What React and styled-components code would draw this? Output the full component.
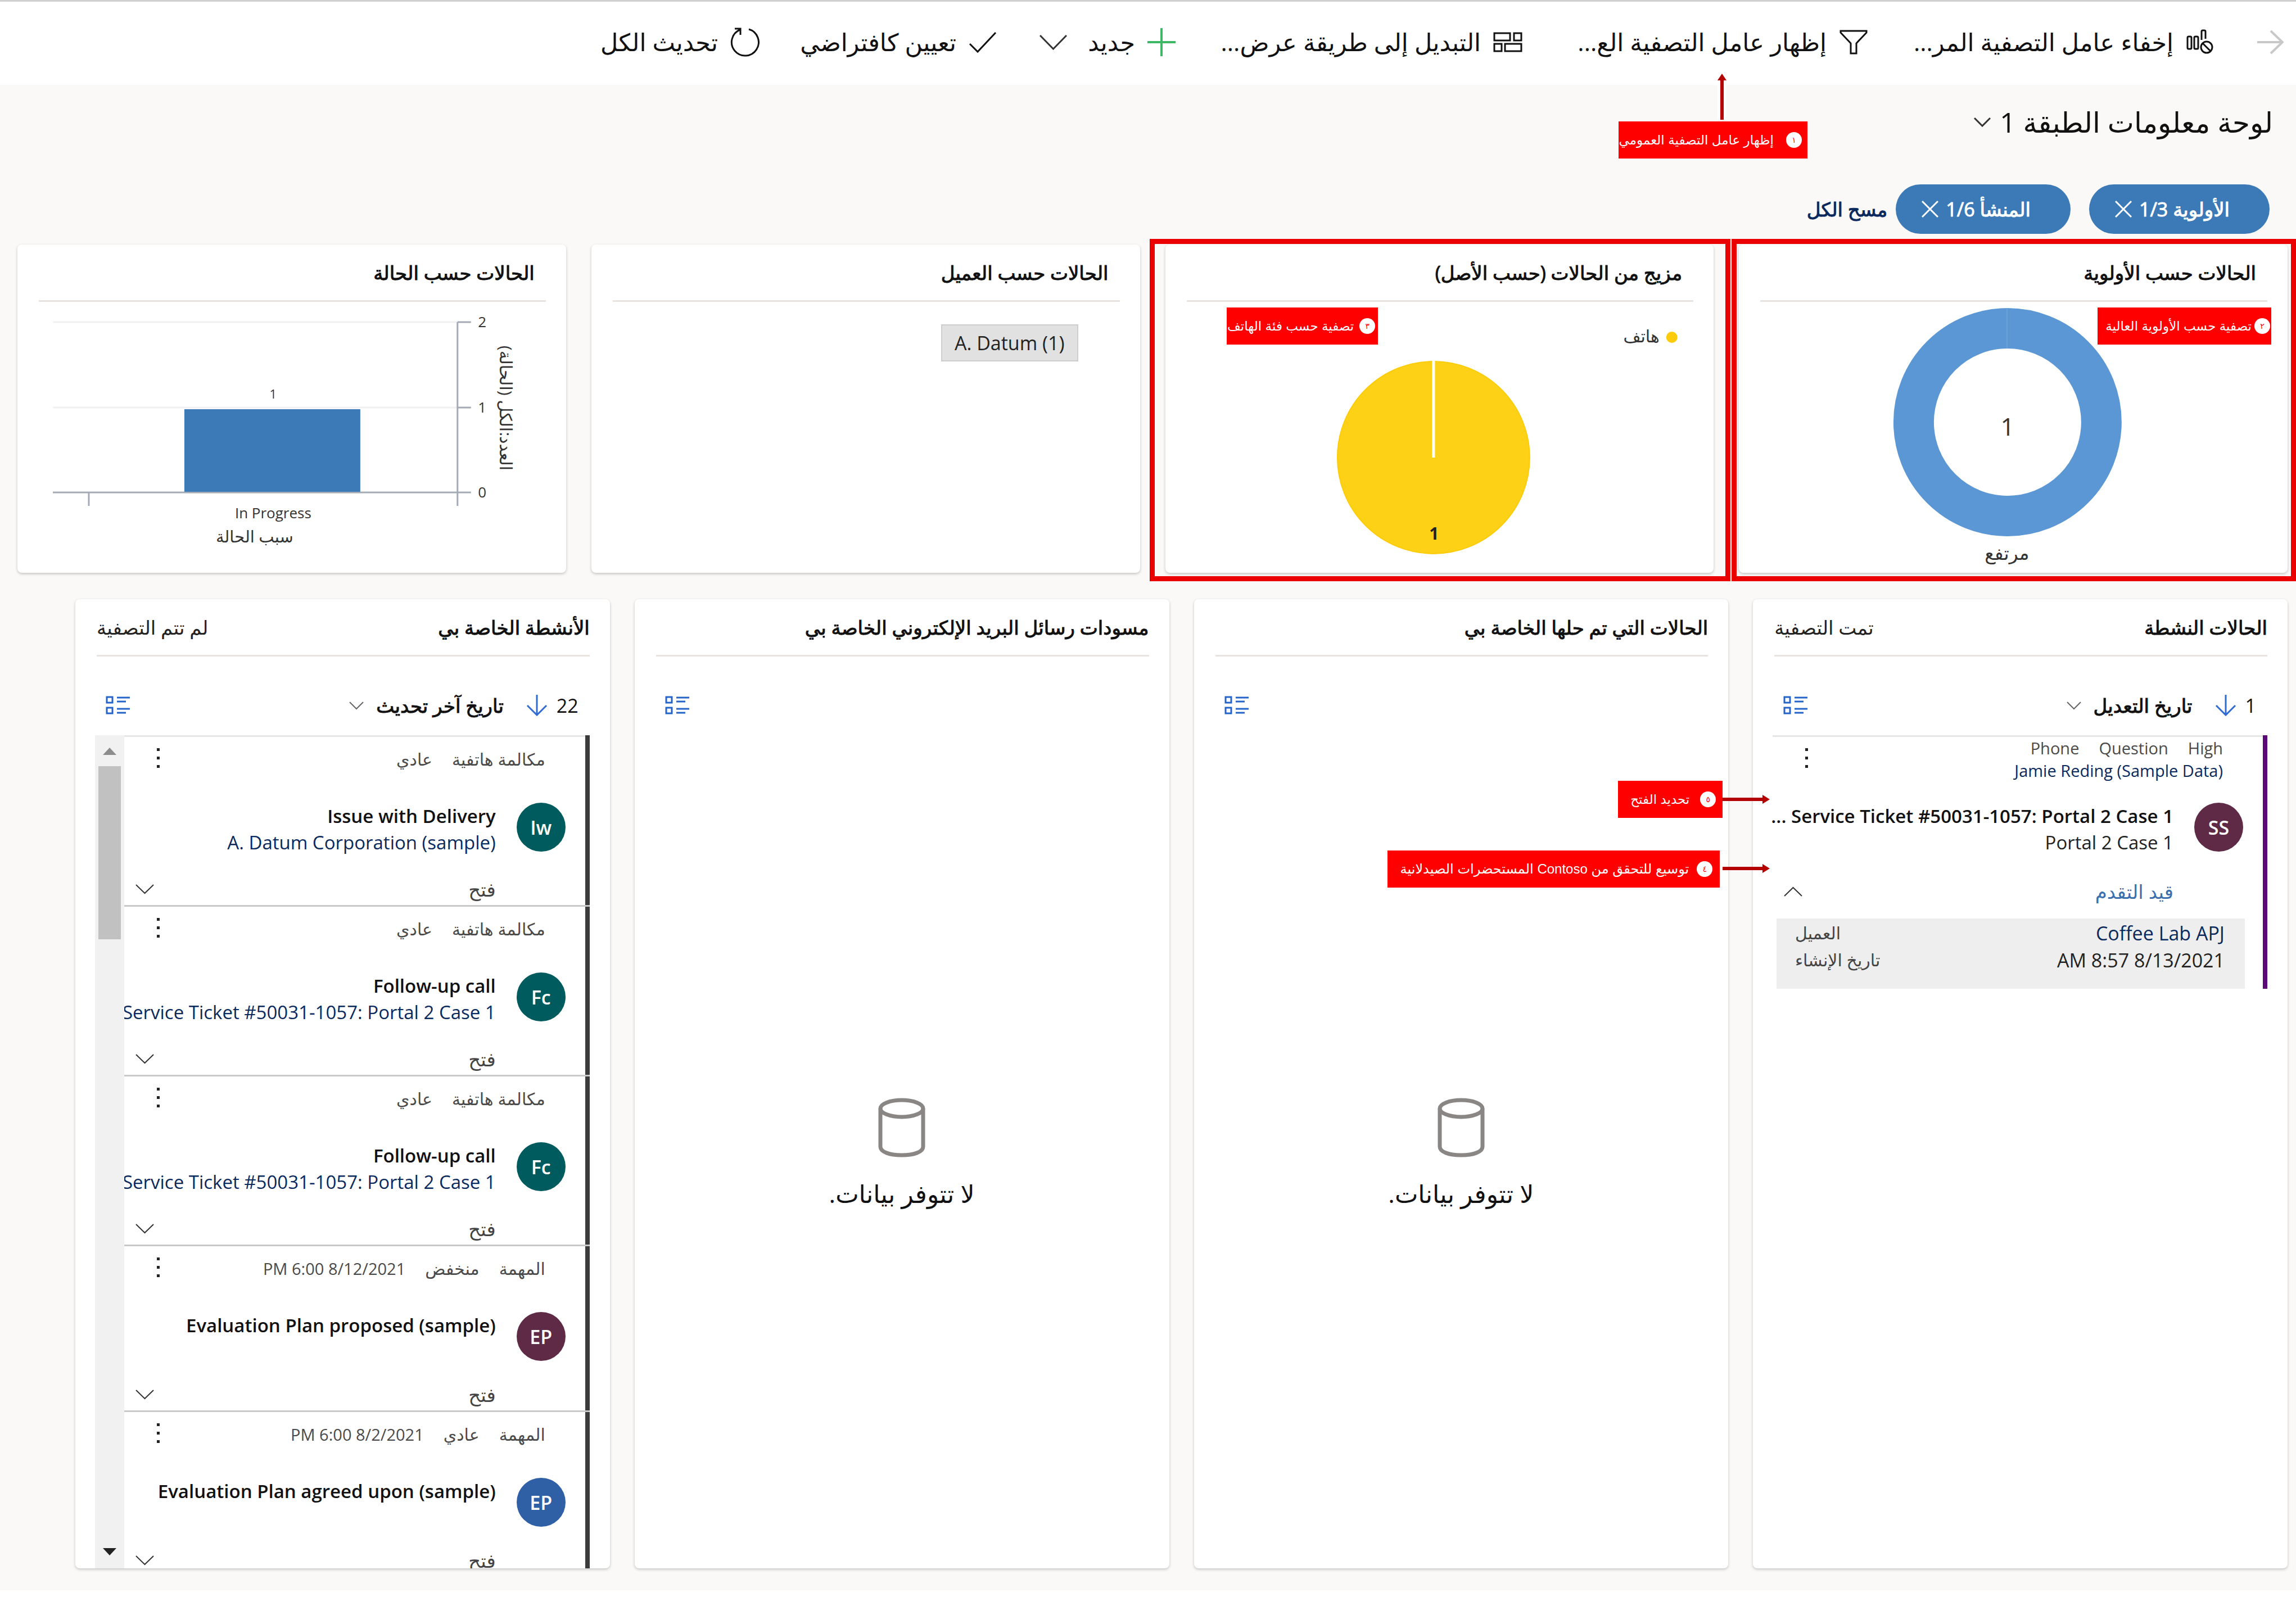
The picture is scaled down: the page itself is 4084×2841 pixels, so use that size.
import React from "react";
import styled, { createGlobalStyle, css } from "styled-components";

const Global = createGlobalStyle`
  *, *::before, *::after { box-sizing: border-box; }
  body {
    margin: 0;
    background: #faf9f8;
    color: #111;
    font-family: "Open Sans", "DejaVu Sans", sans-serif;
  }
  h1, h2, p, ul, dl, dd, dt { margin: 0; padding: 0; font-weight: inherit; font-size: inherit; }
  ul { list-style: none; }
  button { font: inherit; color: inherit; background: none; border: 0; padding: 0; cursor: pointer; }
  a { color: inherit; text-decoration: none; }
  svg { display: block; flex: none; }
`;

/* The Arabic face has no semibold cut, so a hairline stroke stands in for it. */
const semibold = css`
  font-weight: 500;
  -webkit-text-stroke: 1px currentColor;
`;

const Page = styled.div`
  height: 100vh;
  display: flex;
  flex-direction: column;
  overflow: hidden;
  white-space: nowrap;
  border-bottom: 12px solid #fff;
`;

/* ---------- command bar ---------- */

const CommandBar = styled.nav`
  position: relative;
  flex: none;
  height: 151px;
  padding: 0 22px 4px 0;
  border-top: 3px solid #d0d0d0;
  background: #fff;
  display: flex;
  align-items: center;
  font-size: 43px;
  line-height: 48px;
`;

const Command = styled.button`
  display: flex;
  align-items: center;
  gap: 22px;
  flex: none;
  width: ${(p) => p.$width}px;
  margin-inline-start: ${(p) => p.$gap}px;
`;

/* ---------- page heading and filters ---------- */

const Heading = styled.header`
  flex: none;
  height: 177px;
  padding: 34px 41px 0 0;
`;

const ViewPicker = styled.button`
  display: flex;
  align-items: center;
  gap: 16px;
  font-size: 50px;
  line-height: 64px;
`;

const Filters = styled.div`
  flex: none;
  display: flex;
  align-items: center;
  gap: 33px;
  padding-right: 47px;
  margin-bottom: 19px;
`;

const Pill = styled.button`
  height: 88px;
  padding: 0 71px 0 46px;
  border-radius: 44px;
  background: #3b79b7;
  color: #fff;
  display: flex;
  align-items: center;
  gap: 13px;
  font-size: 34px;
  ${semibold}
`;

const ClearAll = styled.a`
  margin-right: -18px;
  color: #0a2a5e;
  font-size: 34px;
  ${semibold}
`;

/* ---------- cards ---------- */

const Charts = styled.section`
  flex: none;
  display: grid;
  grid-template-columns: repeat(4, minmax(0, 1fr));
  gap: 45px;
  padding: 0 15px 0 31px;
  margin-bottom: 47px;
`;

const Lists = styled.section`
  flex: 1;
  min-height: 0;
  display: grid;
  grid-template-columns: repeat(4, minmax(0, 1fr));
  gap: 44px;
  padding: 0 15px 0 134px;
  margin-bottom: 39px;
`;

const Card = styled.article`
  position: relative;
  min-height: 0;
  display: flex;
  flex-direction: column;
  border-radius: 8px;
  background: #fff;
  box-shadow: 0 2px 5px rgba(0, 0, 0, 0.22);
`;

const ChartCard = styled(Card)`
  height: 584px;
`;

const CardHead = styled.header`
  flex: none;
  height: 102px;
  margin: 0 36px 0 38px;
  padding-inline-start: ${(p) => p.$inset || 0}px;
  border-bottom: 3px solid #e8e3df;
  display: flex;
  align-items: center;
  justify-content: space-between;
  font-size: 34px;
`;

const CardTitle = styled.h2`
  ${semibold}
`;

const CardNote = styled.span`
  color: #222;
`;

const Highlight = styled.div`
  position: absolute;
  top: -10px;
  bottom: -15px;
  left: ${(p) => p.$left}px;
  right: ${(p) => p.$right}px;
  border: 9px solid #eb0000;
  pointer-events: none;
`;

const ChartSvg = styled.svg`
  width: 100%;
  height: auto;
  margin-top: 2px;
`;

const ChartText = styled.text`
  direction: rtl;
  fill: ${(p) => p.$fill || "#333"};
  font-size: ${(p) => p.$size}px;
  font-weight: ${(p) => p.$weight || 400};
`;

const Tag = styled.button`
  align-self: flex-start;
  height: 66px;
  margin: 40px 110px 0 0;
  padding: 0 22px;
  border: 2px solid #cdcdcd;
  background: #e1e1e1;
  color: #222;
  font-size: 34px;
`;

/* ---------- list cards ---------- */

const SortBar = styled.div`
  flex: none;
  height: 140px;
  margin: 0 36px 0 38px;
  padding: 34px 20px 0 16px;
  display: flex;
  align-items: center;
  font-size: 34px;
`;

const SortDirection = styled.button`
  margin-inline: 16px 40px;
`;

const SortField = styled.button`
  display: flex;
  align-items: center;
  gap: 22px;
  ${semibold}
`;

const LayoutToggle = styled.button`
  margin-inline-start: auto;
`;

const ListArea = styled.div`
  flex: 1;
  min-height: 0;
  margin: 0 36px 0 35px;
  display: flex;
  overflow: ${(p) => (p.$scroll ? "hidden" : "visible")};
`;

const Rows = styled.ul`
  flex: 1;
  min-width: 0;
  overflow: ${(p) => (p.$scroll ? "hidden" : "visible")};
`;

const Row = styled.li`
  position: relative;
  border-top: 3px solid ${(p) => (p.$first ? "#e6e6e6" : "#c9c9c9")};
  padding: 0 43px 0 0;
  &::before {
    content: "";
    position: absolute;
    right: 0;
    top: ${(p) => (p.$first ? -3 : 0)}px;
    height: ${(p) => (p.$first ? "calc(100% + 3px)" : "100%")};
    width: 8px;
    background: ${(p) => p.$accent};
  }
`;

const Meta = styled.div`
  display: flex;
  justify-content: space-between;
  height: 117px;
  padding: ${(p) => (p.$tight ? 0 : 16)}px 36px 0 57px;
  color: #4a4a4a;
  font-size: ${(p) => (p.$tight ? 29 : 30)}px;
  line-height: ${(p) => (p.$tight ? 40 : 48)}px;
`;

const MetaItems = styled.div`
  display: flex;
  gap: 35px;
`;

const MetaDate = styled.span`
  font-size: 29px;
`;

const Contact = styled.a`
  display: block;
  color: #0a2a5e;
`;

const More = styled.button`
  align-self: flex-start;
  margin-top: ${(p) => (p.$tight ? 18 : 2)}px;
`;

const Main = styled.div`
  display: flex;
  align-items: flex-start;
  gap: 37px;
`;

const Avatar = styled.span`
  flex: none;
  width: 87px;
  height: 87px;
  border-radius: 50%;
  background: ${(p) => p.$color};
  color: #fff;
  display: flex;
  align-items: center;
  justify-content: center;
  font-size: 34px;
  font-weight: 600;
`;

const Texts = styled.div`
  flex: 1;
  min-width: 0;
  font-size: 33px;
  line-height: 47px;
`;

const RowTitle = styled.p`
  font-weight: 600;
`;

const RowSub = styled.p`
  color: ${(p) => (p.$plain ? "#222" : "#0a2a5e")};
`;

const Foot = styled.div`
  display: flex;
  align-items: center;
  justify-content: space-between;
  margin-top: ${(p) => (p.$link ? 40 : 36)}px;
  padding: 0 124px 4px 20px;
  color: ${(p) => (p.$link ? "#3b6fae" : "#444")};
  font-size: 34px;
  line-height: 48px;
`;

const Details = styled.dl`
  margin: 20px -3px 0 0;
  width: 833px;
  max-width: 100%;
  padding: 2px 36px 27px 33px;
  background: #eee;
`;

const DetailRow = styled.div`
  display: flex;
  flex-direction: row-reverse;
  justify-content: space-between;
  line-height: 48px;
  font-size: 34px;
`;

const DetailName = styled.dt`
  color: #444;
  font-size: 30px;
`;

const DetailValue = styled.dd`
  color: ${(p) => (p.$link ? "#0a2a5e" : "#222")};
`;

const ScrollTrack = styled.div`
  flex: none;
  width: 52px;
  background: #f1f1f1;
  display: flex;
  flex-direction: column;
  align-items: center;
  padding: 22px 0 23px;
`;

const ScrollThumb = styled.div`
  width: 40px;
  height: 308px;
  margin: 20px 0 auto;
  background: #c1c1c1;
`;

const Empty = styled.div`
  flex: 1;
  display: flex;
  flex-direction: column;
  align-items: center;
  justify-content: center;
  gap: 38px;
  padding-top: 4px;
  font-size: 44px;
  line-height: 52px;
`;

/* ---------- callouts ---------- */

const Callout = styled.div`
  position: absolute;
  z-index: 2;
  top: ${(p) => p.$top}px;
  right: ${(p) => p.$right};
  width: ${(p) => p.$width}px;
  height: 66px;
  padding-inline-start: ${(p) => p.$pad}px;
  background: #f00;
  color: #fff;
  display: flex;
  align-items: center;
  gap: ${(p) => p.$gap}px;
  font-family: "Liberation Sans", "DejaVu Sans", sans-serif;
  font-size: ${(p) => p.$size || 23}px;
`;

const Step = styled.span`
  flex: none;
  width: 28px;
  height: 28px;
  border-radius: 50%;
  background: #fff;
  color: #f00;
  display: flex;
  align-items: center;
  justify-content: center;
  font-size: 14px;
`;

const Pointer = styled.div`
  position: absolute;
  z-index: 1;
  background: ${(p) => p.$fill || "none"};
  top: ${(p) => p.$top}px;
  right: ${(p) => p.$right};
`;

/* ---------- icons ---------- */

const Icon = ({ w, h, sw = 3, color = "#111", children }) => (
  <svg width={w} height={h} viewBox={`0 0 ${w} ${h}`} fill="none" stroke={color} strokeWidth={sw} aria-hidden="true">
    {children}
  </svg>
);
const Forward = () => (
  <Icon w={48} h={44} color="#c8c8c8" sw={4}><path d="M1 22H45M25 2L46 22L25 42" /></Icon>
);
const HideFilter = () => (
  <Icon w={50} h={46}>
    <rect x="3" y="13" width="7" height="22" rx="2" /><rect x="15" y="13" width="7" height="22" rx="2" />
    <path d="M28 19V4q0-2 2-2h3q2 0 2 2v13" /><circle cx="37" cy="32" r="10" /><path d="M30 25L44 39" />
  </Icon>
);
const Funnel = () => (
  <Icon w={52} h={46}><path d="M3 3H49V6L31 25V43H21V25L3 6Z" /></Icon>
);
const Tiles = () => (
  <Icon w={52} h={38}>
    <rect x="2" y="3" width="28" height="13" /><rect x="37" y="3" width="13" height="13" />
    <rect x="2" y="22" width="13" height="13" /><rect x="21" y="22" width="29" height="13" />
  </Icon>
);
const Plus = () => (
  <Icon w={50} h={50} color="#3fb865" sw={4}><path d="M0 25H50M25 0V50" /></Icon>
);
const Check = () => (
  <Icon w={50} h={40}><path d="M2 23L16 37L48 3" /></Icon>
);
const Refresh = () => (
  <Icon w={52} h={52}><path d="M33 3A24 24 0 1 1 17 4M8 2H18V13" /></Icon>
);
const Chevron = ({ w, h, up, color = "#333", sw = 3 }) => (
  <Icon w={w} h={h} color={color} sw={sw}>
    <path d={up ? `M1 ${h - 1}L${w / 2} 2L${w - 1} ${h - 1}` : `M1 1L${w / 2} ${h - 2}L${w - 1} 1`} />
  </Icon>
);
const Cross = () => (
  <Icon w={30} h={30} color="#fff"><path d="M1 1L29 29M29 1L1 29" /></Icon>
);
const SortArrow = () => (
  <Icon w={38} h={38} color="#2f6bd0"><path d="M19 0V36M2 19L19 36L36 19" /></Icon>
);
const ListIcon = () => (
  <Icon w={43} h={34} color="#2464c8">
    <rect x="2" y="2" width="10" height="10" /><rect x="2" y="21" width="10" height="10" />
    <path d="M20 3H43M20 10H36M20 23H43M20 30H36" />
  </Icon>
);
const Dots = () => (
  <Icon w={8} h={40} sw={0}>
    <g fill="#222"><rect x="1" y="2" width="5" height="5" /><rect x="1" y="17" width="5" height="5" /><rect x="1" y="32" width="5" height="5" /></g>
  </Icon>
);
const Cylinder = () => (
  <Icon w={84} h={106} color="#8a8684" sw={7}>
    <ellipse cx="42" cy="19" rx="38" ry="15" /><path d="M4 19V87C4 96 20 102 42 102S80 96 80 87V19" />
  </Icon>
);
const Triangle = ({ up }) => (
  <svg width="24" height="13" viewBox="0 0 24 13" aria-hidden="true">
    <path d={up ? "M12 0L24 13H0Z" : "M0 0H24L12 13Z"} fill={up ? "#8c8c8c" : "#222"} />
  </svg>
);
const ArrowRight = () => (
  <svg width="84" height="16" viewBox="0 0 84 16" aria-hidden="true">
    <path d="M0 5H71V0L84 8L71 16V11H0Z" fill="#b50000" />
  </svg>
);
const ArrowUp = () => (
  <svg width="16" height="82" viewBox="0 0 16 82" aria-hidden="true">
    <path d="M8 0L16 12H11V82H5V12H0Z" fill="#b50000" />
  </svg>
);

/* ---------- charts ---------- */

const PriorityDonut = () => (
  <ChartSvg viewBox="0 0 976 480" role="img">
    <circle cx="478" cy="212" r="167" fill="none" stroke="#5b97d5" strokeWidth="72" />
    <path d="M477 9V80" stroke="#6ba2da" strokeWidth="2" />
    <ChartText x="478" y="236" textAnchor="middle" $size={43}>1</ChartText>
    <ChartText x="477" y="457" textAnchor="middle" $size={33}>مرتفع</ChartText>
  </ChartSvg>
);

const OriginPie = () => (
  <ChartSvg viewBox="0 0 976 480" role="img">
    <circle cx="901" cy="61" r="10" fill="#fccc0a" />
    <ChartText x="879" y="70" $size={30}>هاتف</ChartText>
    <circle cx="477" cy="275" r="171" fill="#fcd116" stroke="#fccc0a" strokeWidth="2" />
    <path d="M477 102V275" stroke="#fff" strokeWidth="5" />
    <ChartText x="478" y="421" textAnchor="middle" $size={30} $weight={700} $fill="#222">1</ChartText>
  </ChartSvg>
);

const StatusBars = () => (
  <ChartSvg viewBox="0 0 976 480" role="img">
    <path d="M63 34H783M63 186H783" stroke="#f1f1f4" strokeWidth="3" />
    <path d="M63 337H807M783 186H807M783 34H807M127 337V361M783 34V361" stroke="#a5abb5" strokeWidth="3" fill="none" />
    <rect x="297" y="189" width="313" height="147" fill="#3b79b7" />
    <ChartText x="827" y="43" textAnchor="middle" $size={26}>2</ChartText>
    <ChartText x="827" y="195" textAnchor="middle" $size={26}>1</ChartText>
    <ChartText x="827" y="346" textAnchor="middle" $size={26}>0</ChartText>
    <ChartText x="455" y="170" textAnchor="middle" $size={22}>1</ChartText>
    <ChartText x="455" y="383" textAnchor="middle" $size={26}>In Progress</ChartText>
    <ChartText x="422" y="426" textAnchor="middle" $size={29}>سبب الحالة</ChartText>
    <ChartText transform="translate(858 187) rotate(90)" textAnchor="middle" $size={30}>العدد:الكل (الحالة)</ChartText>
  </ChartSvg>
);

/* ---------- data ---------- */

const activities = [
  { meta: ["مكالمة هاتفية", "عادي"], initials: "Iw", color: "#005b5f", title: "Issue with Delivery", sub: "A. Datum Corporation (sample)" },
  { meta: ["مكالمة هاتفية", "عادي"], initials: "Fc", color: "#005b5f", title: "Follow-up call", sub: "Service Ticket #50031-1057: Portal 2 Case 1" },
  { meta: ["مكالمة هاتفية", "عادي"], initials: "Fc", color: "#005b5f", title: "Follow-up call", sub: "Service Ticket #50031-1057: Portal 2 Case 1" },
  { meta: ["المهمة", "منخفض"], due: "8/12/2021 6:00 PM", initials: "EP", color: "#5f2a46", title: "Evaluation Plan proposed (sample)" },
  { meta: ["المهمة", "عادي"], due: "8/2/2021 6:00 PM", initials: "EP", color: "#2f5fa5", title: "Evaluation Plan agreed upon (sample)" },
];

const ListHead = ({ title, note, count, field }) => (
  <>
    <CardHead>
      <CardTitle>{title}</CardTitle>
      {note && <CardNote>{note}</CardNote>}
    </CardHead>
    <SortBar>
      {field && (
        <>
          <span>{count}</span>
          <SortDirection type="button" aria-label="ترتيب"><SortArrow /></SortDirection>
          <SortField type="button">{field}<Chevron w={26} h={15} color="#666" sw={2} /></SortField>
        </>
      )}
      <LayoutToggle type="button" aria-label="عرض"><ListIcon /></LayoutToggle>
    </SortBar>
  </>
);

const EmptyList = () => (
  <Empty>
    <Cylinder />
    <p>لا تتوفر بيانات.</p>
  </Empty>
);

export default function App() {
  return (
    <>
      <Global />
      <Page dir="rtl" lang="ar">
        <CommandBar>
          <Command type="button" $gap={0} $width={48} aria-label="رجوع"><Forward /></Command>
          <Command type="button" $gap={76} $width={527}><HideFilter />إخفاء عامل التصفية المر...</Command>
          <Command type="button" $gap={88} $width={523}><Funnel />إظهار عامل التصفية الع...</Command>
          <Command type="button" $gap={92} $width={538}><Tiles />التبديل إلى طريقة عرض...</Command>
          <Command type="button" $gap={79} $width={153}><Plus />جديد</Command>
          <Command type="button" $gap={40} $width={49} aria-label="المزيد"><Chevron w={49} h={27} /></Command>
          <Command type="button" $gap={76} $width={345}><Check />تعيين كافتراضي</Command>
          <Command type="button" $gap={77} $width={276}><Refresh />تحديث الكل</Command>
          <Pointer $top={128} $right="1013px" $fill="#fff"><ArrowUp /></Pointer>
          <Callout $top={213} $right="869px" $width={336} $pad={10} $gap={22}>
            <Step>١</Step>إظهار عامل التصفية العمومي
          </Callout>
        </CommandBar>

        <Heading>
          <h1><ViewPicker type="button">لوحة معلومات الطبقة 1<Chevron w={30} h={17} /></ViewPicker></h1>
        </Heading>

        <Filters>
          <Pill type="button">الأولوية 1/3<Cross /></Pill>
          <Pill type="button">المنشأ 1/6<Cross /></Pill>
          <ClearAll href="#clear">مسح الكل</ClearAll>
        </Filters>

        <Charts>
          <ChartCard>
            <CardHead $inset={20}><CardTitle>الحالات حسب الأولوية</CardTitle></CardHead>
            <PriorityDonut />
            <Highlight $left={-13} $right={-15} />
            <Callout $top={112} $right="29px" $width={309} $pad={2} $gap={5}>
              <Step>٢</Step>تصفية حسب الأولوية العالية
            </Callout>
          </ChartCard>
          <ChartCard>
            <CardHead $inset={20}><CardTitle>مزيج من الحالات (حسب الأصل)</CardTitle></CardHead>
            <OriginPie />
            <Highlight $left={-28} $right={-30} />
            <Callout $top={112} $right="597px" $width={269} $pad={5} $gap={10}>
              <Step>٣</Step>تصفية حسب فئة الهاتف
            </Callout>
          </ChartCard>
          <ChartCard>
            <CardHead $inset={20}><CardTitle>الحالات حسب العميل</CardTitle></CardHead>
            <Tag type="button"><bdi>A. Datum (1)</bdi></Tag>
          </ChartCard>
          <ChartCard>
            <CardHead $inset={20}><CardTitle>الحالات حسب الحالة</CardTitle></CardHead>
            <StatusBars />
          </ChartCard>
        </Charts>

        <Lists>
          <Card>
            <ListHead title="الحالات النشطة" note="تمت التصفية" count="1" field="تاريخ التعديل" />
            <ListArea>
              <Rows>
                <Row $first $accent="#5c0a78">
                  <Meta $tight>
                    <div>
                      <MetaItems><span>High</span><span>Question</span><span>Phone</span></MetaItems>
                      <Contact href="#contact"><bdi>Jamie Reding (Sample Data)</bdi></Contact>
                    </div>
                    <More type="button" $tight aria-label="المزيد"><Dots /></More>
                  </Meta>
                  <Main>
                    <Avatar $color="#5f2a46">SS</Avatar>
                    <Texts>
                      <RowTitle>Service Ticket #50031-1057: Portal 2 Case 1 ...</RowTitle>
                      <RowSub $plain>Portal 2 Case 1</RowSub>
                    </Texts>
                  </Main>
                  <Foot $link>
                    <span>قيد التقدم</span>
                    <button type="button" aria-label="طي"><Chevron w={33} h={18} up sw={2} /></button>
                  </Foot>
                  <Details>
                    <DetailRow><DetailName>العميل</DetailName><DetailValue $link>Coffee Lab APJ</DetailValue></DetailRow>
                    <DetailRow><DetailName>تاريخ الإنشاء</DetailName><DetailValue>8/13/2021 8:57 AM</DetailValue></DetailRow>
                  </Details>
                </Row>
              </Rows>
            </ListArea>
            <Callout $top={323} $right="calc(100% + 54px)" $width={186} $pad={12} $gap={19}>
              <Step>٥</Step>تحديد الفتح
            </Callout>
            <Callout $top={447} $right="calc(100% + 59px)" $width={591} $pad={13} $gap={14} $size={24}>
              <Step>٤</Step>توسيع للتحقق من Contoso المستحضرات الصيدلانية
            </Callout>
            <Pointer $top={348} $right="calc(100% - 30px)"><ArrowRight /></Pointer>
            <Pointer $top={471} $right="calc(100% - 30px)"><ArrowRight /></Pointer>
          </Card>

          <Card>
            <ListHead title="الحالات التي تم حلها الخاصة بي" />
            <EmptyList />
          </Card>

          <Card>
            <ListHead title="مسودات رسائل البريد الإلكتروني الخاصة بي" />
            <EmptyList />
          </Card>

          <Card>
            <ListHead title="الأنشطة الخاصة بي" note="لم تتم التصفية" count="22" field="تاريخ آخر تحديث" />
            <ListArea $scroll>
              <Rows $scroll>
                {activities.map((a, i) => (
                  <Row key={i} $first={i === 0} $accent="#3b3b3b">
                    <Meta>
                      <MetaItems>
                        {a.meta.map((m) => <span key={m}>{m}</span>)}
                        {a.due && <MetaDate>{a.due}</MetaDate>}
                      </MetaItems>
                      <More type="button" aria-label="المزيد"><Dots /></More>
                    </Meta>
                    <Main>
                      <Avatar $color={a.color}>{a.initials}</Avatar>
                      <Texts>
                        <RowTitle><bdi>{a.title}</bdi></RowTitle>
                        {a.sub && <RowSub><bdi>{a.sub}</bdi></RowSub>}
                      </Texts>
                    </Main>
                    <Foot>
                      <span>فتح</span>
                      <button type="button" aria-label="توسيع"><Chevron w={33} h={18} sw={2} /></button>
                    </Foot>
                  </Row>
                ))}
              </Rows>
              <ScrollTrack>
                <Triangle up />
                <ScrollThumb />
                <Triangle />
              </ScrollTrack>
            </ListArea>
          </Card>
        </Lists>
      </Page>
    </>
  );
}
